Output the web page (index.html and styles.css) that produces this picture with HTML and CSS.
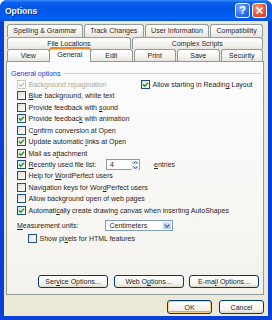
FILE: index.html
```html
<!DOCTYPE html>
<html lang="en">
<head>
  <meta charset="UTF-8" />
  <title>Options</title>
  <link rel="stylesheet" href="styles.css">
</head>
<body>

<div class="window">
  <div class="titlebar">
    <span class="title">Options</span>
    <div class="caption-buttons">
      <span class="cap help">?</span>
      <span class="cap close">
        <svg width="9" height="9" viewBox="0 0 9 9"><path d="M1.5 1.5 L7.5 7.5 M7.5 1.5 L1.5 7.5" stroke="#fff" stroke-width="1.7" fill="none"/></svg>
      </span>
    </div>
  </div>

  <div class="client">
    <div class="tabs">
      <div class="tab-row">
        <div class="tab">Spelling &amp; Grammar</div>
        <div class="tab">Track Changes</div>
        <div class="tab">User Information</div>
        <div class="tab">Compatibility</div>
      </div>
      <div class="tab-row">
        <div class="tab">File Locations</div>
        <div class="tab">Complex Scripts</div>
      </div>
      <div class="tab-row even">
        <div class="tab">View</div>
        <div class="tab active">General</div>
        <div class="tab">Edit</div>
        <div class="tab">Print</div>
        <div class="tab">Save</div>
        <div class="tab">Security</div>
      </div>
    </div>

    <div class="panel">
      <div class="group-title"><span>General options</span></div>

      <div class="row first">
        <span class="check disabled left-col">
          <span class="box"><svg width="7" height="7" viewBox="0 0 7 7"><path d="M1 3.4 L2.8 5.2 L6 1.8" stroke="#C2C0B4" stroke-width="1.5" fill="none"/></svg></span>
          <span>Background repagination</span>
        </span>
        <span class="check">
          <span class="box"><svg width="7" height="7" viewBox="0 0 7 7"><path d="M1 3.4 L2.8 5.2 L6 1.8" stroke="#21A121" stroke-width="1.5" fill="none"/></svg></span>
          <span>Allow starting in Readin<u>g</u> Layout</span>
        </span>
      </div>
      <div class="row">
        <span class="check"><span class="box"></span><span><u>B</u>lue background, white text</span></span>
      </div>
      <div class="row">
        <span class="check"><span class="box"></span><span>Provide feedback with <u>s</u>ound</span></span>
      </div>
      <div class="row">
        <span class="check">
          <span class="box"><svg width="7" height="7" viewBox="0 0 7 7"><path d="M1 3.4 L2.8 5.2 L6 1.8" stroke="#21A121" stroke-width="1.5" fill="none"/></svg></span>
          <span>Provide feedbac<u>k</u> with animation</span>
        </span>
      </div>
      <div class="row">
        <span class="check"><span class="box"></span><span>C<u>o</u>nfirm conversion at Open</span></span>
      </div>
      <div class="row">
        <span class="check">
          <span class="box"><svg width="7" height="7" viewBox="0 0 7 7"><path d="M1 3.4 L2.8 5.2 L6 1.8" stroke="#21A121" stroke-width="1.5" fill="none"/></svg></span>
          <span>Update automatic <u>l</u>inks at Open</span>
        </span>
      </div>
      <div class="row">
        <span class="check">
          <span class="box"><svg width="7" height="7" viewBox="0 0 7 7"><path d="M1 3.4 L2.8 5.2 L6 1.8" stroke="#21A121" stroke-width="1.5" fill="none"/></svg></span>
          <span>Mail as a<u>t</u>tachment</span>
        </span>
      </div>
      <div class="row">
        <span class="check">
          <span class="box"><svg width="7" height="7" viewBox="0 0 7 7"><path d="M1 3.4 L2.8 5.2 L6 1.8" stroke="#21A121" stroke-width="1.5" fill="none"/></svg></span>
          <span class="field-label"><u>R</u>ecently used file list:</span>
        </span>
        <span class="spin">
          <span class="spin-value">4</span>
          <span class="spin-buttons">
            <span class="spin-btn"><svg width="5" height="3" viewBox="0 0 5 3"><path d="M0.5 2.5 L2.5 0.5 L4.5 2.5" stroke="#4D6185" stroke-width="1" fill="none"/></svg></span>
            <span class="spin-btn"><svg width="5" height="3" viewBox="0 0 5 3"><path d="M0.5 0.5 L2.5 2.5 L4.5 0.5" stroke="#4D6185" stroke-width="1" fill="none"/></svg></span>
          </span>
        </span>
        <span class="entries"><u>e</u>ntries</span>
      </div>
      <div class="row">
        <span class="check"><span class="box"></span><span>Help for <u>W</u>ordPerfect users</span></span>
      </div>
      <div class="row">
        <span class="check"><span class="box"></span><span>Navigation keys for Wor<u>d</u>Perfect users</span></span>
      </div>
      <div class="row">
        <span class="check"><span class="box"></span><span>Allow background open of web pages</span></span>
      </div>
      <div class="row">
        <span class="check">
          <span class="box"><svg width="7" height="7" viewBox="0 0 7 7"><path d="M1 3.4 L2.8 5.2 L6 1.8" stroke="#21A121" stroke-width="1.5" fill="none"/></svg></span>
          <span>Automati<u>c</u>ally create drawing canvas when inserting AutoShapes</span>
        </span>
      </div>

      <div class="row measure">
        <span class="measure-label"><u>M</u>easurement units:</span>
        <span class="combo">
          <span class="combo-value">Centimeters</span>
          <span class="combo-btn"><svg width="6" height="4" viewBox="0 0 6 4"><path d="M0.6 0.6 L3 3 L5.4 0.6" stroke="#4D6185" stroke-width="1.3" fill="none"/></svg></span>
        </span>
      </div>
      <div class="row pixels">
        <span class="check"><span class="box"></span><span>Show pi<u>x</u>els for HTML features</span></span>
      </div>

      <div class="panel-buttons">
        <button class="btn wide">Ser<u>v</u>ice Options...</button>
        <button class="btn wide">Web O<u>p</u>tions...</button>
        <button class="btn wide">E-ma<u>i</u>l Options...</button>
      </div>
    </div>

    <div class="dialog-buttons">
      <button class="btn small default">OK</button>
      <button class="btn small">Cancel</button>
    </div>
  </div>
</div>

</body>
</html>
```

FILE: styles.css
```css
* {
  box-sizing: border-box;
}

body {
  margin: 0;
  background: #fff;
  font-family: "Liberation Sans", Arial, sans-serif;
  font-size: 7px;
  color: #262626;
}

.window {
  width: 272px;
  height: 320px;
  background: #0A40D8;
  border-radius: 7px 7px 0 0;
  display: flex;
  flex-direction: column;
  overflow: hidden;
}

.titlebar {
  height: 21px;
  flex: none;
  display: flex;
  align-items: center;
  justify-content: space-between;
  padding: 0 5px 0 5px;
  background: linear-gradient(#3D8DFF 0%, #0A60EE 12%, #0055E5 45%, #0262F3 85%, #0850D6 100%);
}

.title {
  color: #fff;
  font-weight: bold;
  font-size: 8.5px;
  text-shadow: 1px 1px 0 #0A2A8C;
}

.caption-buttons {
  display: flex;
  gap: 2px;
  margin-top: -1px;
}

.cap {
  width: 15px;
  height: 15px;
  border: 1px solid #fff;
  border-radius: 3px;
  display: flex;
  align-items: center;
  justify-content: center;
  color: #fff;
  font-weight: bold;
  font-size: 11px;
  line-height: 1;
}

.help {
  background: radial-gradient(circle at 35% 30%, #7FAEFF, #2F6BEF 60%, #1E50D8);
}

.close {
  background: radial-gradient(circle at 35% 30%, #F49A7F, #E2583E 55%, #C33A1E);
}

.client {
  flex: 1;
  margin: 0 4px 4px;
  background: #ECE9D8;
  padding: 3px 4px 0 2px;
  display: flex;
  flex-direction: column;
}

/* tabs */
.tab-row {
  display: flex;
  height: 12.5px;
  margin-left: 1px;
  align-items: flex-start;
}

.tab-row.even {
  height: 12px;
}

.tab {
  flex: 1 1 auto;
  height: 12.5px;
  border: 1px solid #919B9C;
  border-bottom: 0;
  border-radius: 3px 3px 0 0;
  background: linear-gradient(#FFFFFF, #F4F3EF 60%, #E6E4DB);
  text-align: center;
  line-height: 11px;
  white-space: nowrap;
  margin-right: 1px;
  padding: 0 2px;
}

.tab-row.even .tab {
  flex: 1 1 0;
  height: 12px;
}

.tab-row.even .tab.active {
  height: 15px;
  margin-top: -2px;
  margin-left: -2px;
  margin-right: -1px;
  border-top: 2px solid #E68B2C;
  box-shadow: inset 0 1px 0 #FFC73C;
  background: #FCFCFE;
  line-height: 11px;
  position: relative;
  z-index: 1;
}

/* tab page */
.panel {
  height: 234px;
  border: 1px solid #919B9C;
  background: linear-gradient(#FCFCFE, #F7F6F2 70%, #F2F1EB);
  display: flex;
  flex-direction: column;
  padding: 5.3px 2px 6px 0;
}

.group-title {
  height: 11.45px;
  display: flex;
  align-items: center;
  padding-left: 4px;
  color: #0046D5;
}

.group-title::after {
  content: "";
  flex: 1;
  height: 1px;
  background: #D0D0BF;
  margin-left: 4px;
}

.row {
  height: 11.45px;
  display: flex;
  align-items: center;
  padding-left: 10px;
  white-space: nowrap;
}

.check {
  display: flex;
  align-items: center;
  gap: 2.5px;
}

.left-col {
  width: 124px;
}

.box {
  width: 9px;
  height: 9px;
  flex: none;
  border: 1px solid #1C5180;
  background: linear-gradient(135deg, #DCDCD7, #FFFFFF);
  display: flex;
  align-items: center;
  justify-content: center;
}

.disabled {
  color: #ACA899;
}

.disabled .box {
  border-color: #CAC8BB;
  background: #FFFFFF;
}

.field-label {
  width: 77.5px;
}

.spin {
  width: 34px;
  height: 11px;
  border: 1px solid #7F9DB9;
  background: #fff;
  display: flex;
}

.spin-value {
  flex: 1;
  padding-left: 3px;
  line-height: 9px;
}

.spin-buttons {
  width: 8px;
  display: flex;
  flex-direction: column;
}

.spin-btn {
  flex: 1;
  background: linear-gradient(#D6E2FD, #B5C8F6);
  border: 1px solid #fff;
  border-radius: 1px;
  display: flex;
  align-items: center;
  justify-content: center;
}

.entries {
  margin-left: 14px;
}

.measure {
  height: 12px;
  margin-top: 4px;
}

.measure-label {
  width: 88px;
}

.combo {
  width: 68px;
  height: 11px;
  border: 1px solid #7F9DB9;
  background: #fff;
  display: flex;
}

.combo-value {
  flex: 1;
  padding-left: 3.5px;
  line-height: 9px;
}

.combo-btn {
  width: 10px;
  background: linear-gradient(#D6E2FD, #B5C8F6);
  border: 1px solid #fff;
  border-radius: 1px;
  display: flex;
  align-items: center;
  justify-content: center;
}

.pixels {
  margin-top: 1px;
  padding-left: 21px;
}

/* buttons */
.btn {
  font-family: "Liberation Sans", Arial, sans-serif;
  font-size: 7px;
  color: #262626;
  border: 1px solid #003C74;
  border-radius: 3px;
  background: linear-gradient(#FFFFFF, #F5F4EF 70%, #DCD8CC);
  padding: 0;
  line-height: 1;
}

.panel-buttons {
  margin-top: auto;
  display: flex;
  gap: 5.5px;
  padding-left: 31px;
}

.btn.wide {
  width: 70px;
  height: 13px;
}

.dialog-buttons {
  margin-top: 5px;
  display: flex;
  justify-content: flex-end;
  gap: 7px;
}

.btn.small {
  width: 45px;
  height: 14px;
}

.btn.default {
  box-shadow: inset 0 0 0 1px #F9D37E, inset 0 -1px 0 1px #EFA83B;
}
```
